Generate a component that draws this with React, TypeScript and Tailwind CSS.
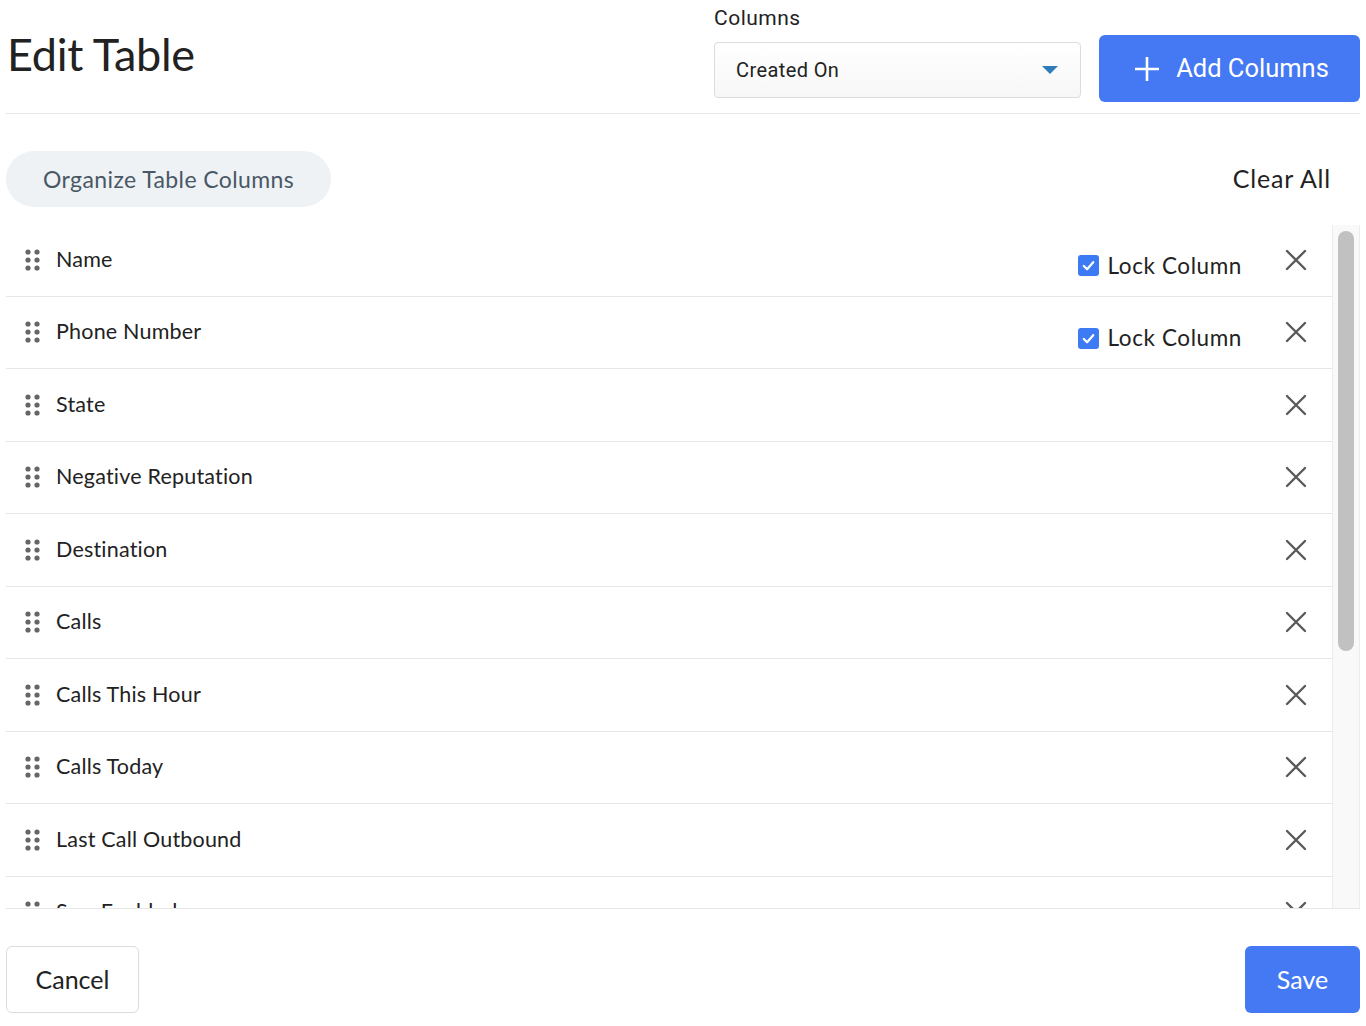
import React from "react";

const rows = [
  { name: "Name", locked: true },
  { name: "Phone Number", locked: true },
  { name: "State" },
  { name: "Negative Reputation" },
  { name: "Destination" },
  { name: "Calls" },
  { name: "Calls This Hour" },
  { name: "Calls Today" },
  { name: "Last Call Outbound" },
  { name: "Sms Enabled" },
];

function DragHandle() {
  return (
    <svg width="16" height="22" viewBox="0 0 16 22" className="shrink-0">
      {[3, 11, 19].map((y) => (
        <g key={y} fill="#666">
          <circle cx="3" cy={y} r="2.6" />
          <circle cx="12" cy={y} r="2.6" />
        </g>
      ))}
    </svg>
  );
}

function CloseIcon() {
  return (
    <svg width="22" height="22" viewBox="0 0 22 22" className="shrink-0">
      <path d="M2 2 L20 20 M20 2 L2 20" stroke="#5a5a5a" strokeWidth="2.4" strokeLinecap="round" />
    </svg>
  );
}

function Checkbox() {
  return (
    <span className="w-[21px] h-[21px] rounded-[3px] bg-[#3c7bf4] flex items-center justify-center shrink-0">
      <svg width="15" height="15" viewBox="0 0 16 16">
        <path d="M3 8.5 L6.5 12 L13 4.5" fill="none" stroke="white" strokeWidth="2.4" strokeLinecap="round" strokeLinejoin="round" />
      </svg>
    </span>
  );
}

export default function App() {
  return (
    <div
      className="w-[1366px] h-[1026px] bg-white px-[6px] text-[#222] overflow-hidden"
      style={{ fontFamily: "Lato, 'Noto Sans', sans-serif" }}
    >
      {/* header */}
      <div className="h-[114px] border-b border-[#e6e6e6] flex justify-between">
        <h1 className="text-[45px] leading-none mt-[32px] ml-[1px] text-[#222] font-normal tracking-[-0.3px]">Edit Table</h1>
        <div className="flex gap-[18px]" style={{ fontFamily: "Roboto, 'Noto Sans', sans-serif" }}>
          <div className="w-[367px]">
            <div className="text-[21px] leading-none mt-[8px] text-[#222] tracking-[0.5px]">Columns</div>
            <div className="mt-[13px] h-[56px] border border-[#dcdcdc] rounded-[4px] bg-gradient-to-b from-white to-[#f7f7f7] flex items-center justify-between pl-[21px] pr-[22px]">
              <span className="text-[20px] text-[#222] tracking-[0.4px]">Created On</span>
              <svg width="16" height="8" viewBox="0 0 16 8">
                <path d="M0 0 L16 0 L8 8 Z" fill="#2f7cb8" />
              </svg>
            </div>
          </div>
          <button className="mt-[35px] h-[67px] w-[261px] rounded-[6px] bg-[#4479f3] text-white flex items-center justify-center gap-[16px] text-[25.5px] pl-[4px]">
            <svg width="26" height="26" viewBox="0 0 26 26">
              <path d="M13 1 V25 M1 13 H25" stroke="white" strokeWidth="2.6" />
            </svg>
            Add Columns
          </button>
        </div>
      </div>

      {/* toolbar */}
      <div className="mt-[37px] flex items-center justify-between">
        <div className="h-[56px] px-[37px] rounded-full bg-[#eef2f5] flex items-center text-[23px] tracking-[0.4px] text-[#4a5866]">
          Organize Table Columns
        </div>
        <button className="mr-[29px] text-[25px] tracking-[0.8px] text-[#222]">Clear All</button>
      </div>

      {/* list */}
      <div className="mt-[17px] h-[685px] flex border-b border-[#e6e6e6]">
        <div className="flex-1 overflow-hidden">
          {rows.map((r) => (
            <div key={r.name} className="h-[72.5px] border-b border-[#e6e6e6] flex items-center pl-[19px] pr-[25px]">
              <DragHandle />
              <span className="ml-[15px] text-[21.5px] tracking-[0.2px] flex-1 -mt-[2px]">{r.name}</span>
              {r.locked && (
                <label className="flex items-center gap-[8px] mr-[43px] mt-[12px]">
                  <Checkbox />
                  <span className="text-[22.5px] tracking-[0.6px] text-[#222]">Lock Column</span>
                </label>
              )}
              <CloseIcon />
            </div>
          ))}
        </div>
        <div className="w-[28px] mt-[1px] bg-[#f9f9f9] border-l border-r border-[#ececec] pt-[6px] flex justify-center">
          <div className="w-[16px] h-[420px] rounded-full bg-[#c1c1c1]" />
        </div>
      </div>

      {/* footer */}
      <div className="mt-[37px] flex justify-between">
        <button className="h-[67px] w-[133px] border border-[#dcdcdc] rounded-[6px] text-[25px] text-[#222]">Cancel</button>
        <button className="h-[67px] w-[115px] rounded-[6px] bg-[#4479f3] text-white text-[25px]">Save</button>
      </div>
    </div>
  );
}
